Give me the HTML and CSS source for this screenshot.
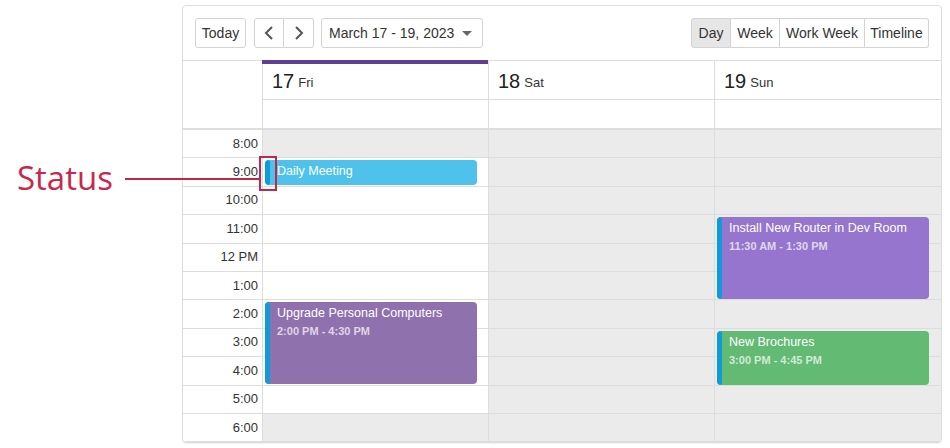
FILE: index.html
```html
<!DOCTYPE html>
<html>
<head>
<meta charset="utf-8">
<link rel="stylesheet" href="styles.css">
</head>
<body>
<div class="page">
  <div class="annot">
    <span class="annot-label">Status</span>
    <span class="annot-line"></span>
    <span class="annot-box"></span>
  </div>
  <div class="scheduler">
    <div class="toolbar">
      <div class="tb-left">
        <button class="btn today">Today</button>
        <div class="btn-group navs">
          <button class="btn nav"><svg width="10" height="14" viewBox="0 0 10 14"><path d="M8 1 L2 7 L8 13" fill="none" stroke="#555" stroke-width="2"/></svg></button>
          <button class="btn nav"><svg width="10" height="14" viewBox="0 0 10 14"><path d="M2 1 L8 7 L2 13" fill="none" stroke="#555" stroke-width="2"/></svg></button>
        </div>
        <button class="btn date"><span>March 17 - 19, 2023</span><svg width="10" height="5" viewBox="0 0 10 5"><path d="M0 0 H10 L5 5 Z" fill="#666"/></svg></button>
      </div>
      <div class="btn-group views">
        <button class="btn view active">Day</button>
        <button class="btn view">Week</button>
        <button class="btn view">Work Week</button>
        <button class="btn view">Timeline</button>
      </div>
    </div>
    <div class="grid">
      <div class="time-col">
        <div class="time-head"></div>
        <div class="time-cell">8:00</div>
        <div class="time-cell">9:00</div>
        <div class="time-cell">10:00</div>
        <div class="time-cell">11:00</div>
        <div class="time-cell">12 PM</div>
        <div class="time-cell">1:00</div>
        <div class="time-cell">2:00</div>
        <div class="time-cell">3:00</div>
        <div class="time-cell">4:00</div>
        <div class="time-cell">5:00</div>
        <div class="time-cell">6:00</div>
      </div>
      <div class="day-col">
        <div class="day-head today-head"><span class="num">17</span><span class="name">Fri</span></div>
        <div class="allday"></div>
        <div class="day-body">
          <div class="cell off"></div>
          <div class="cell"></div>
          <div class="cell"></div>
          <div class="cell"></div>
          <div class="cell"></div>
          <div class="cell"></div>
          <div class="cell"></div>
          <div class="cell"></div>
          <div class="cell"></div>
          <div class="cell"></div>
          <div class="cell off"></div>
          <div class="appt blue" style="top:30px;height:25px"><span class="status"></span><div class="appt-title">Daily Meeting</div></div>
          <div class="appt grape" style="top:172px;height:82px"><span class="status"></span><div class="appt-title">Upgrade Personal Computers</div><div class="appt-time">2:00 PM - 4:30 PM</div></div>
        </div>
      </div>
      <div class="day-col">
        <div class="day-head"><span class="num">18</span><span class="name">Sat</span></div>
        <div class="allday"></div>
        <div class="day-body">
          <div class="cell off"></div>
          <div class="cell off"></div>
          <div class="cell off"></div>
          <div class="cell off"></div>
          <div class="cell off"></div>
          <div class="cell off"></div>
          <div class="cell off"></div>
          <div class="cell off"></div>
          <div class="cell off"></div>
          <div class="cell off"></div>
          <div class="cell off"></div>
        </div>
      </div>
      <div class="day-col">
        <div class="day-head"><span class="num">19</span><span class="name">Sun</span></div>
        <div class="allday"></div>
        <div class="day-body">
          <div class="cell off"></div>
          <div class="cell off"></div>
          <div class="cell off"></div>
          <div class="cell off"></div>
          <div class="cell off"></div>
          <div class="cell off"></div>
          <div class="cell off"></div>
          <div class="cell off"></div>
          <div class="cell off"></div>
          <div class="cell off"></div>
          <div class="cell off"></div>
          <div class="appt violet" style="top:87px;height:82px"><span class="status"></span><div class="appt-title">Install New Router in Dev Room</div><div class="appt-time">11:30 AM - 1:30 PM</div></div>
          <div class="appt green" style="top:201px;height:54px"><span class="status"></span><div class="appt-title">New Brochures</div><div class="appt-time">3:00 PM - 4:45 PM</div></div>
        </div>
      </div>
    </div>
  </div>
</div>
</body>
</html>
```
FILE: styles.css
```css
* { box-sizing: border-box; }
html, body { margin: 0; padding: 0; background: #fff; }
body { font-family: "Liberation Sans", Arial, sans-serif; color: #333; }

.page { position: relative; width: 950px; height: 448px; overflow: hidden; }

/* annotation overlay */
.annot-label {
  position: absolute; left: 17px; top: 161px;
  font-family: "Open Sans", sans-serif; font-size: 33px; line-height: 33px;
  color: #c8284e;
}
.annot-line {
  position: absolute; left: 125px; top: 178px; width: 135px; height: 2px;
  background: #c2274b; z-index: 5;
}
.annot-box {
  position: absolute; left: 259px; top: 156px; width: 18px; height: 35px;
  border: 2px solid #c2274b; z-index: 5;
}

.scheduler {
  margin: 5px 0 0 182px;
  width: 760px; height: 438px;
  border: 1px solid #dddddd;
  border-radius: 4px;
  overflow: hidden;
  box-shadow: 0 1px 1px rgba(0,0,0,0.06);
}

.toolbar {
  height: 55px;
  border-bottom: 1px solid #dddddd;
  padding: 12px 12px 0 12px;
  display: flex; justify-content: space-between; align-items: flex-start;
}
.tb-left { display: flex; gap: 8px; }
.navs { margin-right: -1px; }

.btn {
  height: 30px;
  border: 1px solid #d3d3d3;
  border-radius: 3px;
  background: #fff;
  font-family: "Liberation Sans", Arial, sans-serif;
  font-size: 14px;
  color: #333;
  padding: 0 7px;
  display: flex; align-items: center; justify-content: center;
  white-space: nowrap;
  cursor: pointer;
}
.today { width: 51px; padding: 0; }
.btn-group { display: flex; }
.btn-group .btn { border-radius: 0; }
.btn-group .btn + .btn { border-left: none; }
.btn-group .btn:first-child { border-radius: 3px 0 0 3px; }
.btn-group .btn:last-child { border-radius: 0 3px 3px 0; }
.nav { width: 30px; padding: 0; }
.date { width: 162px; justify-content: space-between; padding: 0 10px 0 7px; }
.view { padding: 0 6px; }
.view.active { background: #e6e6e6; }
.views .btn:nth-child(1) { width: 40px; }
.views .btn:nth-child(2) { width: 49px; }
.views .btn:nth-child(3) { width: 85px; }
.views .btn:nth-child(4) { width: 64px; }

.grid { display: flex; }
.time-col { width: 80px; border-right: 1px solid #dddddd; flex: none; }
.time-head { height: 69px; border-bottom: 2px solid #dddddd; }
.time-cell {
  height: 28.4px; border-bottom: 1px solid #dddddd;
  display: flex; align-items: center; justify-content: flex-end;
  padding-right: 4px; padding-bottom: 1px; font-size: 13px; color: #333;
}

.day-col { width: 226px; flex: none; border-right: 1px solid #dddddd; }
.day-col:last-child { border-right: none; width: 228px; }
.day-head {
  position: relative;
  height: 39px; border-bottom: 1px solid #dddddd;
  display: flex; align-items: center; padding-left: 9px; padding-top: 2px;
}
.today-head::before {
  content: ""; position: absolute; left: -1px; right: 0; top: -1px; height: 4px;
  background: #5f3e95;
}
.num { font-size: 20px; color: #222; }
.name { font-size: 13px; margin-left: 4px; padding-top: 3px; color: #333; }
.allday { height: 30px; border-bottom: 2px solid #dddddd; }

.day-body { position: relative; }
.cell { height: 28.4px; border-bottom: 1px solid #dddddd; }
.cell.off { background: #ebebeb; }

.appt {
  position: absolute; left: 2px; width: 212px;
  border-radius: 4px;
  padding: 4px 6px 0 12px;
  color: #fff;
  overflow: hidden;
}
.appt .status {
  position: absolute; left: 0; top: 0; bottom: 0; width: 5px;
  background: #0f9bd7; border-radius: 3px;
}
.appt-title { font-size: 12.5px; line-height: 15px; white-space: nowrap; }
.appt-time { font-size: 11px; font-weight: bold; line-height: 14px; margin-top: 3px; color: rgba(255,255,255,0.72); }
.blue { background: #4ec2eb; }
.grape { background: #8f71ad; }
.violet { background: #9575cd; }
.green { background: #62ba73; }
```
